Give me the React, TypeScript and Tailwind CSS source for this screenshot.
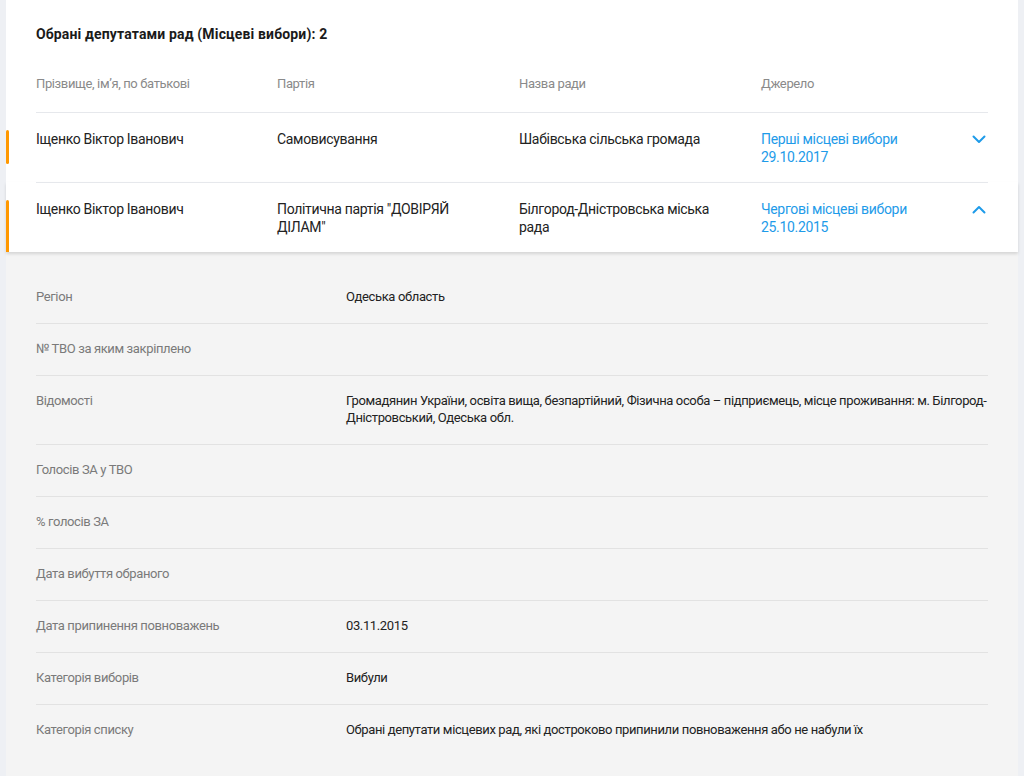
import React from 'react';

const rows = [
  {
    name: 'Іщенко Віктор Іванович',
    party: 'Самовисування',
    council: 'Шабівська сільська громада',
    source: ['Перші місцеві вибори', '29.10.2017'],
    open: false,
  },
  {
    name: 'Іщенко Віктор Іванович',
    party: 'Політична партія "ДОВІРЯЙ ДІЛАМ"',
    council: 'Білгород-Дністровська міська рада',
    source: ['Чергові місцеві вибори', '25.10.2015'],
    open: true,
  },
];

const details: [string, string][] = [
  ['Регіон', 'Одеська область'],
  ['№ ТВО за яким закріплено', ''],
  [
    'Відомості',
    'Громадянин України, освіта вища, безпартійний, Фізична особа – підприємець, місце проживання: м. Білгород-Дністровський, Одеська обл.',
  ],
  ['Голосів ЗА у ТВО', ''],
  ['% голосів ЗА', ''],
  ['Дата вибуття обраного', ''],
  ['Дата припинення повноважень', '03.11.2015'],
  ['Категорія виборів', 'Вибули'],
  ['Категорія списку', 'Обрані депутати місцевих рад, які достроково припинили повноваження або не набули їх'],
];

function Chevron({ up }: { up: boolean }) {
  return (
    <svg width="14" height="9" viewBox="0 0 14 9" fill="none" className="mt-[5px]">
      <polyline
        points={up ? '1.5,7.5 7,2 12.5,7.5' : '1.5,1.5 7,7 12.5,1.5'}
        stroke="#1e9be9"
        strokeWidth="2"
        strokeLinecap="round"
        strokeLinejoin="round"
      />
    </svg>
  );
}

export default function App() {
  return (
    <div className="min-h-[776px] bg-[#eef0f4] px-[6px] font-['Roboto','Liberation_Sans',sans-serif] text-[#222]">
      <div className="min-h-[776px] bg-white">
        <div className="px-[30px] pt-[25px]">
          <h2 className="text-[14px] font-bold leading-[18px] tracking-[0.15px] text-[#1a1a1a]">
            Обрані депутатами рад (Місцеві вибори): 2
          </h2>
          <div className="mt-8 grid grid-cols-[241px_242px_242px_1fr] pb-[19px] text-[13px] leading-[18px] tracking-[-0.37px] text-[#8a8a8a]">
            <div>Прізвище, ім’я, по батькові</div>
            <div>Партія</div>
            <div>Назва ради</div>
            <div>Джерело</div>
          </div>
        </div>

        {rows.map((r, i) => (
          <div
            key={i}
            className={
              r.open
                ? 'relative z-10 bg-white px-[30px] shadow-[0_2px_3px_rgba(0,0,0,0.13)]'
                : 'relative bg-white px-[30px]'
            }
          >
            <span
              className={
                r.open
                  ? 'absolute bottom-0 left-0 top-[18px] w-[3px] rounded-t-sm bg-[#ff9800]'
                  : 'absolute left-0 top-[18px] h-[34px] w-[3px] rounded-sm bg-[#ff9800]'
              }
            />
            <div className="grid grid-cols-[241px_242px_242px_1fr_auto] border-t border-[#e6e8ec] pb-[16px] pt-[17px] text-[14px] leading-[18px] tracking-[-0.32px]">
              <div className="pr-6">{r.name}</div>
              <div className="pr-6">{r.party}</div>
              <div className="pr-6">{r.council}</div>
              <div className="text-[#1e9be9]">
                {r.source[0]}
                <br />
                {r.source[1]}
              </div>
              <div className="pr-[2px]">
                <Chevron up={r.open} />
              </div>
            </div>
          </div>
        ))}

        <div className="bg-[#f4f4f4] px-[30px] pt-[20px] pb-6">
          {details.map(([label, value], i) => (
            <div
              key={label}
              className={
                i < details.length - 1
                  ? 'grid grid-cols-[310px_1fr] border-b border-[#e2e2e2] pb-[18px] pt-[16px] text-[13px] leading-[17px] tracking-[-0.37px]'
                  : 'grid grid-cols-[310px_1fr] pb-[18px] pt-[16px] text-[13px] leading-[17px] tracking-[-0.37px]'
              }
            >
              <div className="text-[#7a7a7a]">{label}</div>
              <div className="text-[#222]">{value}</div>
            </div>
          ))}
        </div>
      </div>
    </div>
  );
}
